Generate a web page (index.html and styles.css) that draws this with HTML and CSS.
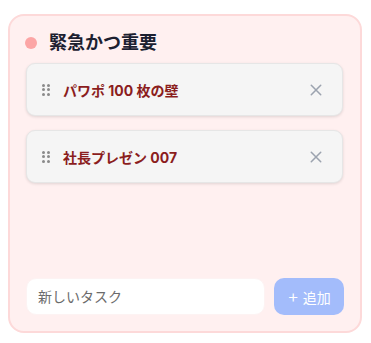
FILE: index.html
```html
<!DOCTYPE html>
<html lang="ja">
<head>
<meta charset="utf-8">
<link rel="stylesheet" href="styles.css">
</head>
<body>
<section class="quadrant">
  <header class="quadrant-head">
    <span class="dot"></span>
    <h2 class="title">緊急かつ重要</h2>
  </header>
  <ul class="tasks">
    <li class="task">
      <span class="handle"><i></i><i></i><i></i><i></i><i></i><i></i></span>
      <span class="task-text">パワポ 100 枚の壁</span>
      <svg class="close" width="14" height="14" viewBox="0 0 14 14"><path d="M1.5 1.5L12.5 12.5M12.5 1.5L1.5 12.5" stroke="#9ca3af" stroke-width="1.8" stroke-linecap="round"/></svg>
    </li>
    <li class="task">
      <span class="handle"><i></i><i></i><i></i><i></i><i></i><i></i></span>
      <span class="task-text">社長プレゼン 007</span>
      <svg class="close" width="14" height="14" viewBox="0 0 14 14"><path d="M1.5 1.5L12.5 12.5M12.5 1.5L1.5 12.5" stroke="#9ca3af" stroke-width="1.8" stroke-linecap="round"/></svg>
    </li>
  </ul>
  <form class="add-row">
    <input class="add-input" type="text" placeholder="新しいタスク">
    <button class="add-btn" type="button"><span class="plus">+</span> 追加</button>
  </form>
</section>
</body>
</html>
```
FILE: styles.css
```css
html, body {
  margin: 0;
  padding: 0;
  background: #ffffff;
}
body {
  padding: 14px 9px 10px 8px;
  font-family: Inter, "Noto Sans CJK JP", sans-serif;
}
.quadrant {
  box-sizing: border-box;
  width: 354px;
  height: 319px;
  border: 2px solid #fdd9d9;
  border-radius: 16px;
  background: #fff0f0;
  padding: 16px 16px 16px 16px;
  display: flex;
  flex-direction: column;
}
.quadrant-head {
  display: flex;
  align-items: center;
  gap: 12px;
  height: 22px;
  margin-bottom: 9px;
}
.dot {
  width: 12px;
  height: 12px;
  border-radius: 50%;
  background: #fca5a5;
  margin-left: -1px;
}
.title {
  margin: 0;
  font-size: 18px;
  font-weight: 700;
  color: #1c2030;
  line-height: 22px;
}
.tasks {
  list-style: none;
  margin: 0;
  padding: 0;
  display: flex;
  flex-direction: column;
  gap: 14px;
  flex: 1;
}
.task {
  box-sizing: border-box;
  height: 53px;
  margin-right: 1px;
  display: flex;
  align-items: center;
  background: #f5f5f5;
  border: 1px solid #e6e6e6;
  border-radius: 9px;
  box-shadow: 0 1px 3px rgba(0,0,0,0.12);
  padding: 0 20px 0 15px;
}
.handle {
  display: grid;
  grid-template-columns: 3px 3px;
  grid-auto-rows: 3px;
  column-gap: 2px;
  row-gap: 1.5px;
  margin-right: 13px;
}
.handle i {
  width: 3px;
  height: 3px;
  border-radius: 50%;
  background: #8a8a8a;
}
.task-text {
  flex: 1;
  font-size: 14px;
  font-weight: 700;
  color: #8b1d1d;
}
.close {
  width: 12px;
  height: 12px;
}
.add-row {
  display: flex;
  gap: 9px;
  margin: 0;
}
.add-input {
  box-sizing: border-box;
  flex: 1 1 0;
  min-width: 0;
  width: 0;
  height: 37px;
  border: 1px solid #fdf3f3;
  border-radius: 10px;
  background: #ffffff;
  padding: 0 11px;
  font-family: Inter, "Noto Sans CJK JP", sans-serif;
  font-size: 14px;
  color: #374151;
  outline: none;
}
.add-input::placeholder {
  color: #6b6b6b;
}
.add-btn {
  box-sizing: border-box;
  flex: 0 0 70px;
  width: 70px;
  height: 37px;
  border: none;
  border-radius: 10px;
  background: #a3bcfb;
  color: #ffffff;
  font-family: Inter, "Noto Sans CJK JP", sans-serif;
  font-size: 14px;
  padding: 0;
}
.plus {
  font-size: 18px;
  line-height: 14px;
  font-weight: 300;
}
```
